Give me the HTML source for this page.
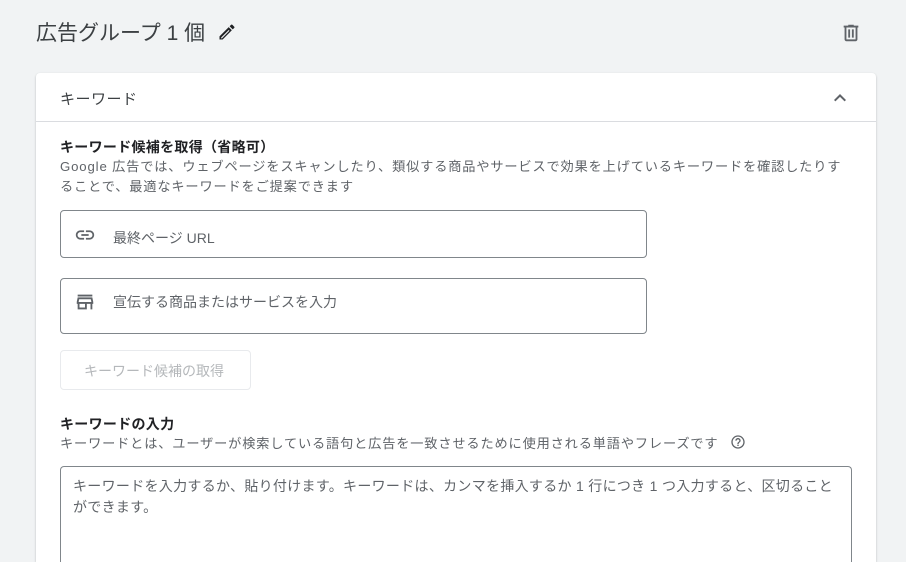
<!DOCTYPE html>
<html style="width:906px;height:562px;overflow:hidden"><head><meta charset="utf-8"><style>
body{margin:0;width:906px;height:562px;background:#f1f3f4;overflow:hidden;font-family:"Liberation Sans","Noto Sans CJK JP",sans-serif;color:#202124;position:relative}
.a{position:absolute}
.title{left:36px;top:17px;font-size:21px;color:#3c4043}
.card{left:36px;top:73px;width:840px;height:489px;background:#fff;border-radius:4px 4px 0 0;box-shadow:0 1px 2px rgba(60,64,67,.3);overflow:hidden}
.hdr{left:0;top:0;width:840px;height:48px;border-bottom:1px solid #dadce0}
.box{border:1px solid #80868b;border-radius:4px;background:#fff}
.ph{font-size:14px;color:#5f6368}
</style></head><body>
<div class="a title">広告グループ 1 個</div>
<svg class="a" style="left:217px;top:22px" width="20" height="20" viewBox="0 0 24 24"><path fill="#202124" d="M3 17.25V21h3.75L17.81 9.94l-3.75-3.75L3 17.25zm2.92 2.33H5v-.92l9.06-9.06.92.92L5.92 19.58zM20.71 7.04a1 1 0 0 0 0-1.41l-2.34-2.34a1 1 0 0 0-1.41 0l-1.83 1.83 3.75 3.75 1.83-1.83z"/></svg>
<svg class="a" style="left:840px;top:22px" width="22" height="22" viewBox="0 0 24 24"><path fill="#5f6368" d="M15 4V3H9v1H4v2h1v13c0 1.1.9 2 2 2h10c1.1 0 2-.9 2-2V6h1V4h-5zm2 15H7V6h10v13zM9 8h2v9H9zm4 0h2v9h-2z"/></svg>
<div class="a card">
 <div class="a hdr"></div>
 <div class="a" style="left:24px;top:15px;font-size:15px;color:#3c4043;letter-spacing:0.5px">キーワード</div>
 <svg class="a" style="left:792px;top:13px" width="24" height="24" viewBox="0 0 24 24"><path fill="#5f6368" d="M7.41 15.41 12 10.83l4.59 4.58L18 14l-6-6-6 6z"/></svg>
 <div class="a" style="left:24px;top:64px;font-size:14px;font-weight:bold;letter-spacing:0.3px">キーワード候補を取得（省略可）</div>
 <div class="a" style="left:24px;top:84px;font-size:13.2px;line-height:20px;color:#5f6368;width:795px;letter-spacing:0.85px">Google 広告では、ウェブページをスキャンしたり、類似する商品やサービスで効果を上げているキーワードを確認したりすることで、最適なキーワードをご提案できます</div>
 <div class="a box" style="left:24px;top:137px;width:585px;height:46px"></div>
 <svg class="a" style="left:38px;top:151px" width="22" height="22" viewBox="0 0 24 24"><path fill="#5f6368" d="M3.9 12c0-1.71 1.39-3.1 3.1-3.1h4V7H7c-2.76 0-5 2.240-5 5s2.24 5 5 5h4v-1.9H7c-1.71 0-3.1-1.39-3.1-3.1zM8 13h8v-2H8v2zm9-6h-4v1.9h4c1.71 0 3.1 1.39 3.1 3.1s-1.39 3.1-3.1 3.1h-4V17h4c2.76 0 5-2.24 5-5s-2.24-5-5-5z"/></svg>
 <div class="a ph" style="left:77px;top:155px">最終ページ URL</div>
 <div class="a box" style="left:24px;top:205px;width:585px;height:54px"></div>
 <svg class="a" style="left:38px;top:218px" width="22" height="22" viewBox="0 0 24 24"><path fill="#5f6368" d="M4 4h16v2H4zm16 3H4l-1 5v2h1v6h10v-6h4v6h2v-6h1v-2l-1-5zm-8 11H6v-4h6v4zm-6.96-6 .6-3h12.72l.6 3H5.04z"/></svg>
 <div class="a ph" style="left:77px;top:219px">宣伝する商品またはサービスを入力</div>
 <div class="a" style="left:24px;top:277px;width:189px;height:38px;border:1px solid #e8eaed;border-radius:4px"></div>
 <div class="a" style="left:48px;top:288px;font-size:14px;color:#b5b8bb">キーワード候補の取得</div>
 <div class="a" style="left:24px;top:341px;font-size:14px;font-weight:bold;letter-spacing:0.3px">キーワードの入力</div>
 <div class="a" style="left:24px;top:360px;font-size:13.2px;color:#5f6368;letter-spacing:0.85px">キーワードとは、ユーザーが検索している語句と広告を一致させるために使用される単語やフレーズです</div>
 <svg class="a" style="left:694px;top:361px" width="16" height="16" viewBox="0 0 24 24"><path fill="#5f6368" d="M11 18h2v-2h-2v2zm1-16C6.48 2 2 6.48 2 12s4.48 10 10 10 10-4.48 10-10S17.52 2 12 2zm0 18c-4.41 0-8-3.590-8-8s3.59-8 8-8 8 3.59 8 8-3.59 8-8 8zm0-14c-2.21 0-4 1.79-4 4h2c0-1.1.9-2 2-2s2 .9 2 2c0 2-3 1.75-3 5h2c0-2.25 3-2.5 3-5 0-2.21-1.79-4-4-4z"/></svg>
 <div class="a box" style="left:24px;top:393px;width:790px;height:96px;border-bottom:none;border-radius:4px 4px 0 0"></div>
 <div class="a" style="left:37px;top:403px;width:770px;font-size:14px;line-height:21px;color:#5f6368;letter-spacing:0.3px">キーワードを入力するか、貼り付けます。キーワードは、カンマを挿入するか 1 行につき 1 つ入力すると、区切ることができます。</div>
</div>
</body></html>
